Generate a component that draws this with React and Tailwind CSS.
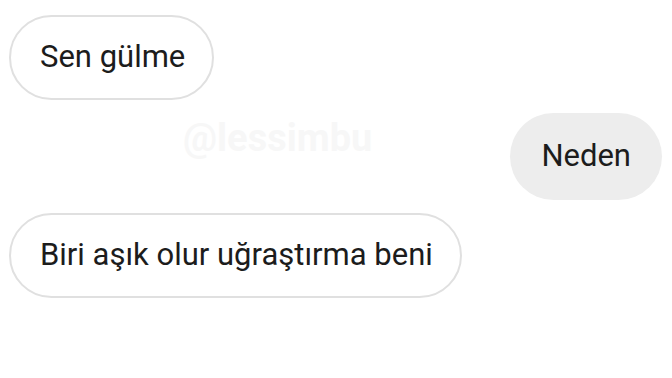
import React from 'react';

const messages = [
  { text: 'Sen gülme', mine: false },
  { text: 'Neden', mine: true },
  { text: 'Biri aşık olur uğraştırma beni', mine: false },
];

const Bubble = ({ text, mine }) => (
  <div className={`flex ${mine ? 'justify-end' : 'justify-start'}`}>
    <div
      className={
        mine
          ? 'h-[87px] px-[31px] flex items-center rounded-full bg-[#ededed] text-[31px] text-[#1c1c1c]'
          : 'h-[85px] pl-[29px] pr-[27px] flex items-center rounded-full bg-white border-2 border-[#e0e0e0] text-[31px] text-[#1c1c1c]'
      }
    >
      {text}
    </div>
  </div>
);

export default function App() {
  return (
    <div
      className="relative w-[672px] h-[378px] bg-white overflow-hidden"
      style={{ fontFamily: 'Roboto, "Noto Sans", sans-serif' }}
    >
      <div className="flex flex-col gap-[13px] pt-[15px] pl-[9px] pr-[10px]">
        {messages.map((m, i) => (
          <Bubble key={i} text={m.text} mine={m.mine} />
        ))}
      </div>
      {/* watermark */}
      <span className="absolute left-[183px] top-[110px] text-[38px] font-bold text-[#f7f7f7] select-none">
        @lessimbu
      </span>
    </div>
  );
}
